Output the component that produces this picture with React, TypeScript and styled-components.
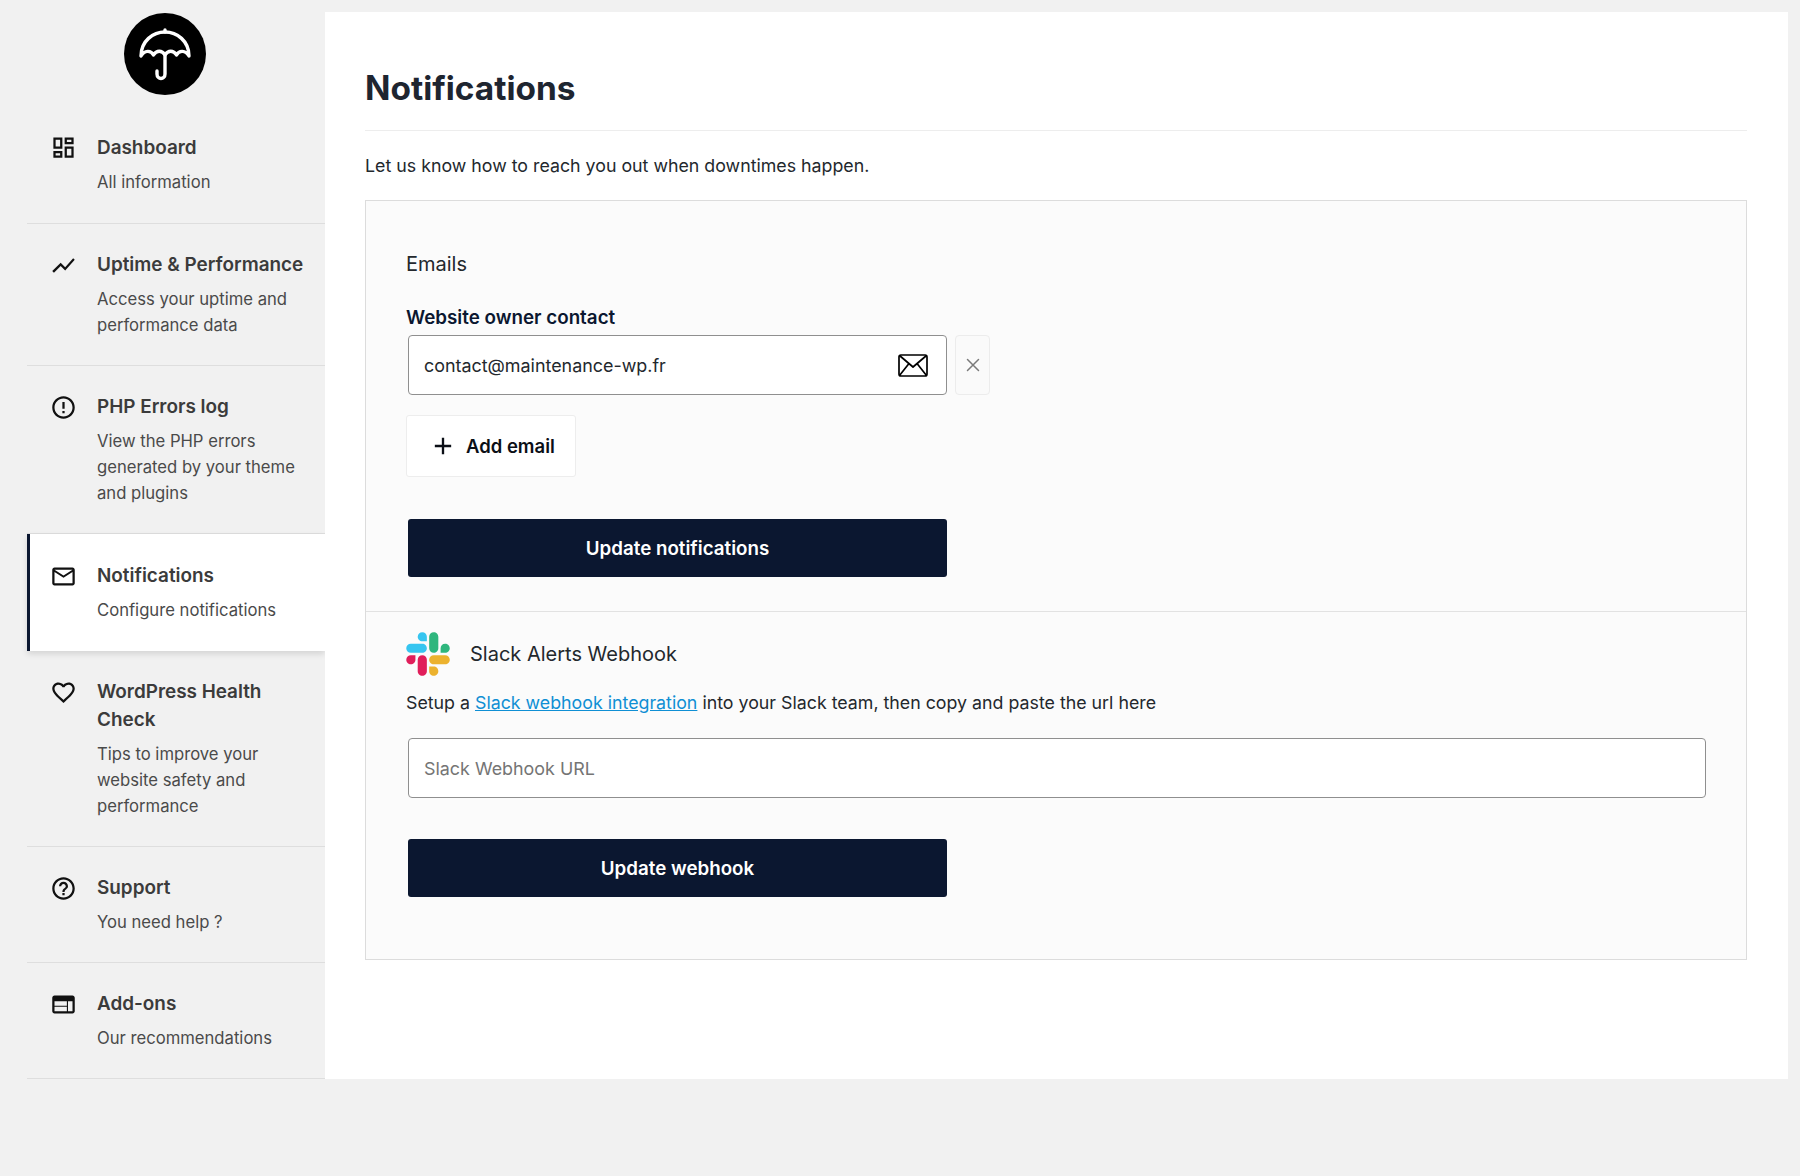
import React from "react";
import styled, { createGlobalStyle } from "styled-components";
import { MdOutlineDashboard, MdShowChart, MdErrorOutline, MdMailOutline, MdFavoriteBorder, MdHelpOutline, MdWeb, MdAdd } from "react-icons/md";

const Global = createGlobalStyle`
  html, body { margin: 0; padding: 0; background: #f1f1f1; }
  body { font-family: Inter, "Liberation Sans", sans-serif; -webkit-font-smoothing: antialiased; }
  * { box-sizing: border-box; }
`;

const Page = styled.div`
  display: flex;
  align-items: stretch;
  width: 1800px;
  height: 1176px;
  padding: 12px 13px 97px 27px;
`;
const Sidebar = styled.nav`
  width: 298px;
  flex: none;
  display: flex;
  flex-direction: column;
`;
const LogoWrap = styled.div`
  height: 95px;
  display: flex;
  justify-content: center;
  padding-right: 23px;
  padding-top: 1px;
`;
const MenuItem = styled.a<{ $active?: boolean }>`
  display: flex;
  gap: 20px;
  padding: ${p => (p.$active ? "28px" : "27px")} 12px ${p => (p.$active ? "28px" : "27px")} ${p => (p.$active ? "19px" : "22px")};
  border-bottom: ${p => (p.$active ? "none" : "1px solid #dedede")};
  border-left: ${p => (p.$active ? "3px solid #0b1730" : "none")};
  background: ${p => (p.$active ? "#fff" : "transparent")};
  box-shadow: ${p => (p.$active ? "0 3px 6px rgba(0,0,0,.12)" : "none")};
  &:first-of-type {
    padding-top: 26.5px;
    padding-bottom: 28.5px;
  }
`;
const IconSlot = styled.span`
  flex: none;
  width: 28px;
  height: 28px;
  display: flex;
  align-items: center;
  justify-content: center;
  color: #111;
  font-size: 27px;
`;
const ItemText = styled.div`
  display: flex;
  flex-direction: column;
  gap: 7px;
`;
const ItemTitle = styled.div`
  font-size: 18.9px;
  line-height: 28px;
  font-weight: 600;
  color: #3b3b3b;
`;
const ItemSub = styled.div`
  font-size: 16.65px;
  line-height: 26px;
  color: #4a4a4a;
`;
const Main = styled.main`
  flex: 1;
  background: #fff;
  padding: 56px 41px 0 40px;
`;
const Heading = styled.h1`
  margin: 0;
  font-size: 33.4px;
  line-height: 40px;
  font-weight: 700;
  color: #1e2530;
  padding-bottom: 22px;
  border-bottom: 1px solid #ededed;
`;
const Intro = styled.p`
  margin: 21.5px 0 21.5px;
  font-size: 17.8px;
  line-height: 26px;
  color: #23282d;
`;
const Card = styled.section`
  background: #fbfbfb;
  border: 1px solid #dcdcdc;
  height: 760px;
`;
const EmailSection = styled.div`
  padding: 49px 40px 35px;
  border-bottom: 1px solid #e2e2e2;
  height: 411px;
`;
const SectionTitle = styled.h2`
  margin: 0;
  font-size: 20px;
  line-height: 28px;
  font-weight: 400;
  color: #23282d;
`;
const Label = styled.label`
  display: block;
  margin-top: 27.5px;
  font-size: 18.8px;
  line-height: 24px;
  font-weight: 600;
  color: #0b1730;
`;
const InputRow = styled.div`
  display: flex;
  gap: 8px;
  margin-top: 5.5px;
`;
const InputShell = styled.div<{ $wide?: boolean }>`
  width: ${p => (p.$wide ? "1298px" : "539px")};
  height: 60px;
  margin-left: 2px;
  flex: none;
  background: #fff;
  border: 1px solid #8f8f8f;
  border-radius: 4px;
  display: flex;
  align-items: center;
  justify-content: space-between;
  padding: 0 18px 0 15px;
`;
const Value = styled.span<{ $placeholder?: boolean }>`
  font-size: 17.9px;
  color: ${p => (p.$placeholder ? "#757575" : "#23282d")};
`;
const RemoveButton = styled.button`
  width: 35px;
  height: 60px;
  background: #fafafa;
  border: 1px solid #ececec;
  border-radius: 4px;
  display: flex;
  align-items: center;
  justify-content: center;
  padding: 0;
`;
const AddButton = styled.button`
  margin-top: 20px;
  width: 170px;
  height: 62px;
  background: #fff;
  border: 1px solid #ededed;
  border-radius: 3px;
  display: flex;
  align-items: center;
  gap: 9px;
  padding: 0 0 0 22px;
  font-family: inherit;
  font-size: 18.5px;
  font-weight: 600;
  color: #0b0f16;
  svg { font-size: 28px; flex: none; }
`;
const Primary = styled.button<{ $tight?: boolean }>`
  display: block;
  margin: ${p => (p.$tight ? "41px" : "42px")} 0 0 2px;
  width: 539px;
  height: 58px;
  background: #0b1730;
  color: #fff;
  border: none;
  border-radius: 3px;
  font-family: inherit;
  font-size: 18.75px;
  font-weight: 600;
`;
const SlackSection = styled.div`
  padding: 20px 40px 0;
`;
const SlackHead = styled.div`
  display: flex;
  align-items: center;
  gap: 20px;
`;
const SlackTitle = styled.h2`
  margin: 0 0 1px;
  font-size: 20px;
  font-weight: 400;
  color: #23282d;
`;
const Setup = styled.p`
  margin: 14px 0 22px;
  font-size: 17.8px;
  line-height: 26px;
  color: #23282d;
`;
const Link = styled.a`
  color: #0f8fd4;
  text-decoration: underline;
`;

const UmbrellaLogo = () => (
  <svg width="82" height="82" viewBox="0 0 82 82">
    <circle cx="41" cy="41" r="41" fill="#000" />
    <g fill="none" stroke="#fff" strokeWidth="3.4" strokeLinecap="round" strokeLinejoin="round">
      <path d="M17 43C17 28 29 19 41 19C53 19 65 28 65 43C61.500 37 55 37 52.500 42C49.500 37 44 37 41 42C38 37 32.500 37 29.500 42C27 37 20.500 37 17 43Z" />
      <path d="M41 17V19M41 42V61C41 67 33 67 33 61V58" />
    </g>
  </svg>
);
const EnvelopeIcon = () => (
  <svg width="30" height="23" viewBox="0 0 30 23" fill="none" stroke="#000" strokeWidth="1.7" strokeLinejoin="round">
    <rect x="1" y="1" width="28" height="21" rx="2" />
    <path d="M1.500 1.500L15 13L28.500 1.500M1.500 21.500L11 9.500M28.500 21.500L19 9.500" />
  </svg>
);
const CloseIcon = () => (
  <svg width="14" height="14" viewBox="0 0 14 14" fill="none" stroke="#7a7a7a" strokeWidth="1.500" strokeLinecap="round">
    <path d="M1.500 1.500L12.500 12.500M12.500 1.500L1.500 12.500" />
  </svg>
);
const SlackLogo = () => (
  <svg width="44" height="44" viewBox="0 0 127 127">
    <path d="M27.200 80c0 7.300-5.900 13.200-13.200 13.200C6.700 93.200.800 87.300.800 80c0-7.300 5.900-13.200 13.200-13.200h13.200V80zm6.600 0c0-7.300 5.900-13.200 13.200-13.200 7.300 0 13.200 5.900 13.200 13.200v33c0 7.300-5.900 13.200-13.200 13.200-7.300 0-13.200-5.900-13.200-13.200V80z" fill="#E01E5A" />
    <path d="M47 27c-7.300 0-13.200-5.900-13.200-13.200C33.800 6.500 39.700.600 47 .600c7.300 0 13.200 5.900 13.200 13.200V27H47zm0 6.700c7.300 0 13.200 5.900 13.200 13.200 0 7.300-5.900 13.200-13.200 13.200H13.900C6.600 60.100.700 54.200.700 46.900c0-7.300 5.900-13.200 13.200-13.200H47z" fill="#36C5F0" />
    <path d="M99.900 46.900c0-7.300 5.900-13.200 13.200-13.200 7.300 0 13.200 5.900 13.200 13.200 0 7.300-5.900 13.200-13.200 13.200H99.900V46.900zm-6.600 0c0 7.300-5.900 13.200-13.200 13.200-7.300 0-13.200-5.900-13.200-13.200V13.800C66.900 6.500 72.800.600 80.100.600c7.300 0 13.200 5.900 13.200 13.200v33.100z" fill="#2EB67D" />
    <path d="M80.100 99.800c7.300 0 13.200 5.900 13.200 13.200 0 7.300-5.900 13.200-13.200 13.200-7.300 0-13.200-5.900-13.200-13.200V99.800h13.200zm0-6.600c-7.300 0-13.200-5.900-13.200-13.200 0-7.300 5.900-13.200 13.200-13.200h33.100c7.300 0 13.200 5.900 13.200 13.200 0 7.300-5.900 13.200-13.200 13.200H80.100z" fill="#ECB22E" />
  </svg>
);

const items = [
  { icon: <MdOutlineDashboard />, title: "Dashboard", sub: ["All information"] },
  { icon: <MdShowChart />, title: "Uptime & Performance", sub: ["Access your uptime and", "performance data"] },
  { icon: <MdErrorOutline />, title: "PHP Errors log", sub: ["View the PHP errors", "generated by your theme", "and plugins"] },
  { icon: <MdMailOutline />, title: "Notifications", sub: ["Configure notifications"], active: true },
  { icon: <MdFavoriteBorder />, title: ["WordPress Health", "Check"], sub: ["Tips to improve your", "website safety and", "performance"] },
  { icon: <MdHelpOutline />, title: "Support", sub: ["You need help ?"] },
  { icon: <MdWeb />, title: "Add-ons", sub: ["Our recommendations"] },
];

export default function App() {
  return (
    <>
      <Global />
      <Page>
        <Sidebar>
          <LogoWrap><UmbrellaLogo /></LogoWrap>
          {items.map((it, i) => (
            <MenuItem key={i} $active={it.active}>
              <IconSlot>{it.icon}</IconSlot>
              <ItemText>
                <ItemTitle>
                  {Array.isArray(it.title) ? it.title.map((t, k) => <div key={k}>{t}</div>) : it.title}
                </ItemTitle>
                <ItemSub>{it.sub.map((s, k) => <div key={k}>{s}</div>)}</ItemSub>
              </ItemText>
            </MenuItem>
          ))}
        </Sidebar>
        <Main>
          <Heading>Notifications</Heading>
          <Intro>Let us know how to reach you out when downtimes happen.</Intro>
          <Card>
            <EmailSection>
              <SectionTitle>Emails</SectionTitle>
              <Label>Website owner contact</Label>
              <InputRow>
                <InputShell>
                  <Value>contact@maintenance-wp.fr</Value>
                  <EnvelopeIcon />
                </InputShell>
                <RemoveButton aria-label="Remove"><CloseIcon /></RemoveButton>
              </InputRow>
              <AddButton><MdAdd /> Add email</AddButton>
              <Primary>Update notifications</Primary>
            </EmailSection>
            <SlackSection>
              <SlackHead>
                <SlackLogo />
                <SlackTitle>Slack Alerts Webhook</SlackTitle>
              </SlackHead>
              <Setup>
                Setup a <Link href="#">Slack webhook integration</Link> into your Slack team, then copy and paste the url here
              </Setup>
              <InputShell $wide>
                <Value $placeholder>Slack Webhook URL</Value>
              </InputShell>
              <Primary $tight>Update webhook</Primary>
            </SlackSection>
          </Card>
        </Main>
      </Page>
    </>
  );
}
